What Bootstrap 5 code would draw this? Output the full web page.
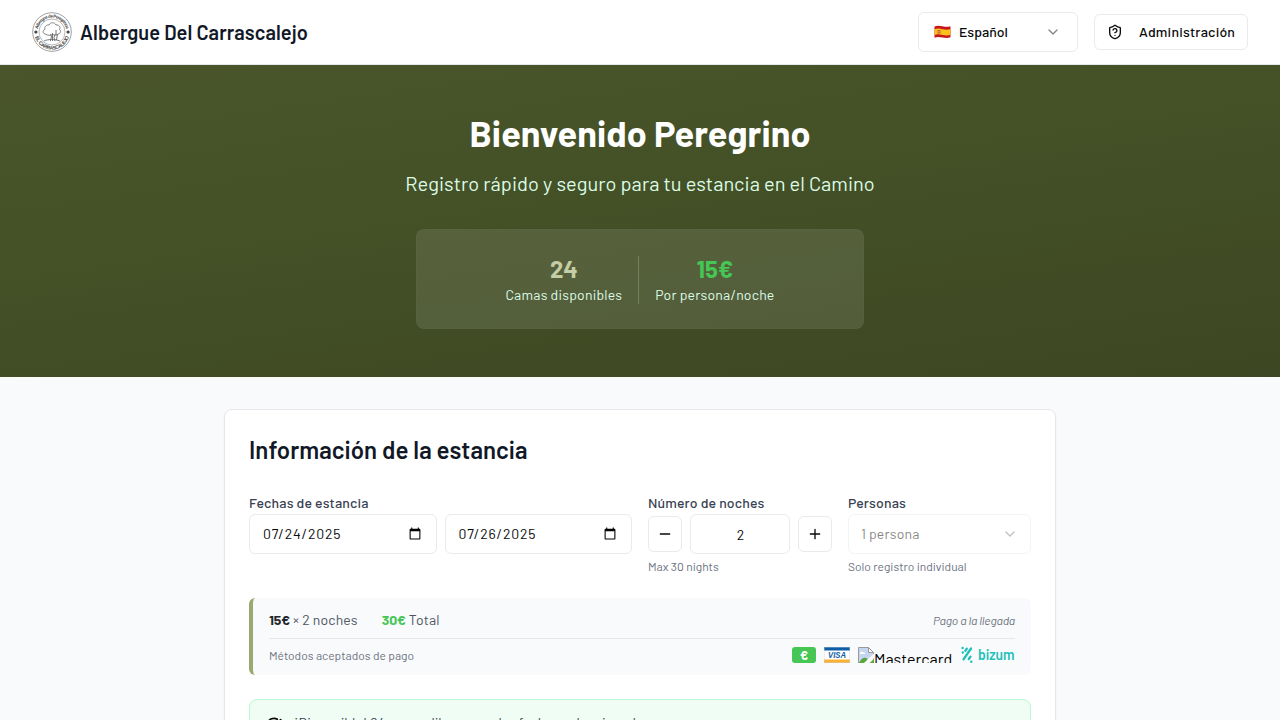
<!DOCTYPE html>
<html lang="es">
<head>
<meta charset="utf-8">
<meta name="viewport" content="width=device-width, initial-scale=1">
<title>Albergue Del Carrascalejo</title>
<link href="https://cdn.jsdelivr.net/npm/bootstrap@5.3.0/dist/css/bootstrap.min.css" rel="stylesheet">
<style>
html,body{height:100%;overflow:hidden}
body{font-family:Barlow,Roboto,"Liberation Sans",sans-serif;background:#f9fafb;color:#111827;font-size:14px;line-height:20px}
svg{display:block;flex:none}
.topbar{height:65px;border-bottom:1px solid #e5e7eb;background:#fff;padding:0 32px}
.brand-name{font-size:20px;font-weight:600;line-height:28px;letter-spacing:.08px}
.ctl{border:1px solid #e8eaed;border-radius:6px;background:#fff;color:#0a0a0a}
.lang{width:160px;height:40px;padding:0 16px 0 15px;font-weight:500}
.admin{width:154px;height:36px;padding:0 12px;font-weight:500;letter-spacing:.2px}
.hero{height:312px;padding-top:48px;background:linear-gradient(172deg,#4a552b 0%,#445026 45%,#3d4723 100%)}
.hero h1{font-size:36px;line-height:40px;font-weight:700;margin:0 0 16px;letter-spacing:.08px}
.sub{font-size:20px;line-height:28px;color:#dcfce7;margin-bottom:32px;letter-spacing:.05px}
.stats{width:448px;height:100px;border-radius:8px;background:rgba(255,255,255,.1);border:1px solid rgba(255,255,255,.02)}
.num{font-size:24px;line-height:32px;font-weight:700}
.beds{color:#c4cda6}
.green{color:#45c655}
.lbl{color:#dcfce7;letter-spacing:.22px}
.vline{width:1px;height:48px;margin-top:2px;background:rgba(255,255,255,.2)}
.stay{width:832px;height:400px;margin-top:32px;padding:24px;border:1px solid #e5e7eb;border-radius:8px;background:#fff;box-shadow:0 1px 2px rgba(0,0,0,.05)}
.stay h2{font-size:24px;line-height:32px;font-weight:600;margin:0 0 27px;letter-spacing:.07px}
.flabel{font-weight:500;color:#374151;margin-bottom:1px;letter-spacing:.15px}
.field{height:40px;padding:0 12px 0 13px;min-width:0;font-size:14px}
input[type=date]{letter-spacing:.8px}
.nights{width:100px}
.step{width:34px;height:36px}
.g-dates{width:383px}
.g-nights{width:184px}
.g-people{width:183px}
.hint{font-size:12px;line-height:16px;color:#6b7280;margin-top:4px}
.off{opacity:.5}
.price{height:77px;margin-top:24px;background:#f9fafb;border-left:4px solid #9ca870;border-radius:6px;padding:12px 16px 0;color:#4b5563}
.amounts{letter-spacing:.18px}
.amounts b{letter-spacing:-.1px}
.price-top{padding-bottom:8px;border-bottom:1px solid #e5e7eb}
.small-note{font-size:12px;line-height:16px;color:#6b7280}
i.small-note{letter-spacing:-.17px}
.cash{width:24px;height:16px;border-radius:3px;background:#45c655;color:#fff;font-weight:700;font-size:13px;line-height:16px}
.alt-text{font-size:16px;line-height:24px;color:#000}
.alt-img{height:16px;width:95px;overflow:hidden}
.avail{margin-top:24px;height:60px;border:1px solid #bbf7d0;border-radius:8px;background:#f0fdf4;color:#374151;padding:13px 16px;letter-spacing:.06px}
</style>
</head>
<body>
<header class="topbar d-flex align-items-center justify-content-between">
  <div class="d-flex align-items-center gap-2">
    <svg width="40" height="40" viewBox="0 0 40 40" fill="none" stroke="#555">
      <defs><path id="arcTop" d="M5.600 20a14.400 14.400 0 0 1 28.800 0"/><path id="arcBottom" d="M2.400 20a17.600 17.600 0 0 0 35.200 0"/></defs>
      <circle cx="20" cy="20" r="19.300" stroke-width=".8" stroke="#888"/>
      <circle cx="20" cy="20" r="13" stroke-width=".6" stroke="#888"/>
      <g fill="#444" stroke="none" font-family="Liberation Sans, sans-serif" font-weight="700">
        <text font-size="4.400"><textPath href="#arcTop" startOffset="3" textLength="39">Albergue de Peregrinos</textPath></text>
        <text font-size="5"><textPath href="#arcBottom" startOffset="5" textLength="45">EL CARRASCALEJO</textPath></text>
        <circle cx="3.900" cy="20" r="1.600"/><circle cx="36.100" cy="20" r="1.600"/>
      </g>
      <path d="M13 22c-3-1-2-4 0-4.500-1-3 2-5 4-4.500 1-3 6-3 7 0 3-.5 5 2 3.500 4.500 2 1 1 4.500-1.500 4.500-1 1.500-4 1.500-5 .3-2 1.400-5 1.400-8-.3z" stroke-width=".8" stroke="#666"/>
      <path d="M18.500 22l1 3-1.200 4M23 22.500l-1 3 1 3.500M20.500 21v8M24 18v5M25.500 22l-1 6M12 29c4-2 11-2 16 0" stroke-width=".9" stroke="#666"/>
    </svg>
    <span class="brand-name text-nowrap">Albergue Del Carrascalejo</span>
  </div>
  <div class="d-flex align-items-center gap-3">
    <div class="ctl lang d-flex align-items-center">
      <svg width="17" height="14" viewBox="0 0 17 14"><path d="M.5 1.500C3 .2 5.500.6 8.500 1.300s5.500.7 8 0v11c-2.500 1-5 .8-8 .2s-5.500-.9-8 .2z" fill="#c8161d"/><path d="M.5 4.300c2.500-1 5-.8 8-.1s5.500.6 8 0v5.600c-2.500.8-5 .7-8 .1s-5.500-.9-8 0z" fill="#fcc21b"/><path d="M3.500 5h3v3.600h-3z" fill="#c3632a"/><path d="M4.400 6h1.200v1.600H4.400z" fill="#e8b4a0"/></svg>
      <span class="ms-2 flex-grow-1">Español</span>
      <svg width="16" height="16" viewBox="0 0 24 24" fill="none" stroke="#858585" stroke-width="2" stroke-linecap="round" stroke-linejoin="round"><path d="m6 9 6 6 6-6"/></svg>
    </div>
    <div class="ctl admin d-flex align-items-center justify-content-between">
      <svg width="16" height="16" viewBox="0 0 24 24" fill="none" stroke="#0a0a0a" stroke-width="2" stroke-linecap="round" stroke-linejoin="round"><path d="M20 13c0 5-3.500 7.500-7.660 8.950a1 1 0 0 1-.67-.01C7.500 20.500 4 18 4 13V6a1 1 0 0 1 1-1c2 0 4.500-1.200 6.240-2.720a1.170 1.170 0 0 1 1.520 0C14.510 3.810 17 5 19 5a1 1 0 0 1 1 1z"/><path d="M9.100 9a3 3 0 0 1 5.820 1c0 2-3 3-3 3M12 17h.01"/></svg>
      <span>Administración</span>
    </div>
  </div>
</header>
<section class="hero text-center text-white">
  <h1>Bienvenido Peregrino</h1>
  <div class="sub">Registro rápido y seguro para tu estancia en el Camino</div>
  <div class="stats d-flex align-items-center justify-content-center gap-3 mx-auto">
    <div><div class="num beds">24</div><div class="lbl">Camas disponibles</div></div>
    <div class="vline"></div>
    <div><div class="num green">15€</div><div class="lbl">Por persona/noche</div></div>
  </div>
</section>
<main class="stay mx-auto">
  <h2>Información de la estancia</h2>
  <div class="d-flex gap-3">
    <div class="g-dates">
      <div class="flabel">Fechas de estancia</div>
      <div class="d-flex gap-2">
        <input class="ctl field flex-fill w-50" type="date" value="2025-07-24" aria-label="Llegada">
        <input class="ctl field flex-fill w-50" type="date" value="2025-07-26" aria-label="Salida">
      </div>
    </div>
    <div class="g-nights">
      <div class="flabel">Número de noches</div>
      <div class="d-flex gap-2 align-items-center">
        <div class="ctl step d-flex align-items-center justify-content-center"><svg width="16" height="16" viewBox="0 0 24 24" stroke="#0a0a0a" stroke-width="2" stroke-linecap="round"><path d="M5 12h14"/></svg></div>
        <input class="ctl field nights text-center" value="2" aria-label="Noches">
        <div class="ctl step d-flex align-items-center justify-content-center"><svg width="16" height="16" viewBox="0 0 24 24" stroke="#0a0a0a" stroke-width="2" stroke-linecap="round"><path d="M5 12h14M12 5v14"/></svg></div>
      </div>
      <div class="hint">Max 30 nights</div>
    </div>
    <div class="g-people">
      <div class="flabel">Personas</div>
      <div class="ctl field off d-flex align-items-center justify-content-between px-2"><span class="ps-1 amounts">1 persona</span>
        <svg class="me-1" width="16" height="16" viewBox="0 0 24 24" fill="none" stroke="#858585" stroke-width="2" stroke-linecap="round" stroke-linejoin="round"><path d="m6 9 6 6 6-6"/></svg></div>
      <div class="hint">Solo registro individual</div>
    </div>
  </div>
  <div class="price">
    <div class="price-top d-flex align-items-center">
      <span class="amounts"><b class="text-dark">15€</b> × 2 noches</span>
      <span class="ms-4 amounts"><b class="green">30€</b> Total</span>
      <i class="small-note ms-auto">Pago a la llegada</i>
    </div>
    <div class="d-flex align-items-center pt-2 gap-2">
      <span class="small-note me-auto">Métodos aceptados de pago</span>
      <div class="cash text-center">€</div>
      <svg width="26" height="16" viewBox="0 0 26 16"><path d="M0 0h26v16H0z" fill="#fff"/><path d="M0 0h26v3.500H0z" fill="#0e5da5"/><path d="M0 12.500h26V16H0z" fill="#f9b233"/><path d="M.25.25h25.500v15.500H.25z" fill="none" stroke="#c9d3de" stroke-width=".5"/><text x="4" y="11.200" font-family="Liberation Sans, sans-serif" font-size="9" font-weight="700" font-style="italic" fill="#0e5da5" textLength="18" lengthAdjust="spacingAndGlyphs">VISA</text></svg>
      <div class="alt-img d-flex">
        <svg width="16" height="16" viewBox="0 0 16 16"><path d="M.5.5h10l5 5v10.500H.5z" fill="#c6d6f1" stroke="#9a9a9a"/><path d="M10.500.5v5h5z" fill="#fff" stroke="#9a9a9a"/><path d="M2 6.500c0-2 3-2.500 3.500-.8 1.500-.5 2 .8 1.500 1.300H2z" fill="#fff"/><path d="M1 16c2-5 5-6 7.500-5l3 5z" fill="#5aa63c"/><path d="M6 16 16 6.500V11l-4.500 5z" fill="#f9fafb"/><path d="m12 16 4-4v4z" fill="#5aa63c"/></svg>
        <span class="alt-text">Mastercard</span>
      </div>
      <svg class="overflow-visible" width="54" height="16" viewBox="0 1 54 16"><g stroke="#1cc0bb" stroke-width="2.300" stroke-linecap="round" fill="none"><path d="M10 2.500 2.500 13.300M5.800 2.700 4.300 4.900M9.500 10.600 7.800 13"/><path d="M1.600 2v.01M1.800 6.500v.01M10.300 15.700v.01" stroke-width="2.400"/></g><text x="17" y="14" font-family="Barlow, Roboto, sans-serif" font-size="15" font-weight="600" fill="#1cc0bb" textLength="36.500" lengthAdjust="spacingAndGlyphs">bizum</text></svg>
    </div>
  </div>
  <div class="avail d-flex">
    <svg class="mt-1" width="16" height="16" viewBox="0 0 24 24" fill="none" stroke="#0a0a0a" stroke-width="2.500" stroke-linecap="round" stroke-linejoin="round"><path d="M21.800 10A10 10 0 1 1 17 3.340M9 11l3 3L22 4"/></svg>
    <span class="ms-2 ps-1">¡Disponible! 24 camas libres para las fechas seleccionadas</span>
  </div>
</main>
</body></html>
